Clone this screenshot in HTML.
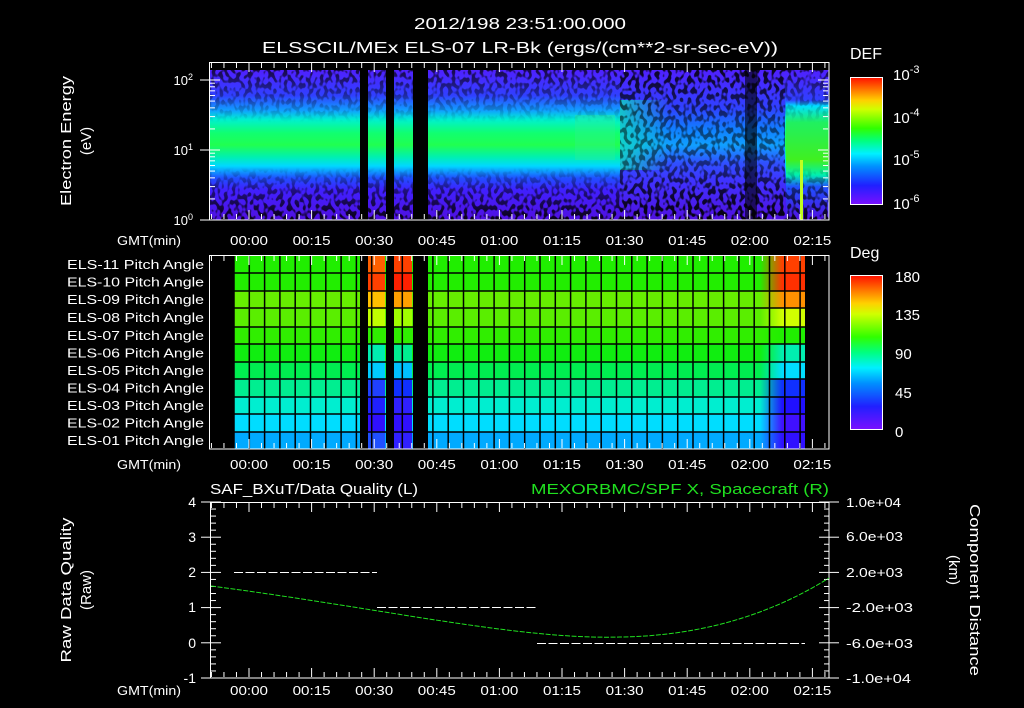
<!DOCTYPE html>
<html><head><meta charset="utf-8"><style>
html,body{margin:0;padding:0;background:#000;width:1024px;height:708px;overflow:hidden}
svg{display:block}
text{font-family:"Liberation Sans",sans-serif;fill:#fff}
</style></head><body>
<svg id="s" width="1024" height="708" viewBox="0 0 1024 708" xmlns="http://www.w3.org/2000/svg">
<defs>
<linearGradient id="spec" x1="0" y1="70" x2="0" y2="220" gradientUnits="userSpaceOnUse">
<stop offset="0" stop-color="#5020ff"/>
<stop offset="0.17" stop-color="#3040ff"/>
<stop offset="0.27" stop-color="#10a0ff"/>
<stop offset="0.33" stop-color="#00f0d0"/>
<stop offset="0.42" stop-color="#10ff70"/>
<stop offset="0.5" stop-color="#20ff50"/>
<stop offset="0.58" stop-color="#00f0b0"/>
<stop offset="0.64" stop-color="#00d8ff"/>
<stop offset="0.72" stop-color="#2050ff"/>
<stop offset="0.8" stop-color="#4020ff"/>
<stop offset="1" stop-color="#5010e0"/>
</linearGradient>
<linearGradient id="spec2" x1="0" y1="70" x2="0" y2="220" gradientUnits="userSpaceOnUse">
<stop offset="0" stop-color="#5020ff"/>
<stop offset="0.25" stop-color="#3040ff"/>
<stop offset="0.4" stop-color="#1080ff"/>
<stop offset="0.5" stop-color="#10a0ff"/>
<stop offset="0.62" stop-color="#3050ff"/>
<stop offset="0.75" stop-color="#4030ff"/>
<stop offset="1" stop-color="#5010e0"/>
</linearGradient>
<linearGradient id="specR" x1="0" y1="70" x2="0" y2="220" gradientUnits="userSpaceOnUse">
<stop offset="0" stop-color="#5020ff"/>
<stop offset="0.2" stop-color="#3040ff"/>
<stop offset="0.24" stop-color="#00e0ff"/>
<stop offset="0.35" stop-color="#20f060"/>
<stop offset="0.6" stop-color="#40f020"/>
<stop offset="0.7" stop-color="#00f0b0"/>
<stop offset="0.78" stop-color="#2050ff"/>
<stop offset="1" stop-color="#5010e0"/>
</linearGradient>
<linearGradient id="noiseMask" x1="0" y1="70" x2="0" y2="220" gradientUnits="userSpaceOnUse">
<stop offset="0" stop-color="#fff" stop-opacity="0.7"/>
<stop offset="0.25" stop-color="#fff" stop-opacity="0.2"/>
<stop offset="0.35" stop-color="#fff" stop-opacity="0"/>
<stop offset="0.65" stop-color="#fff" stop-opacity="0"/>
<stop offset="0.8" stop-color="#fff" stop-opacity="0.5"/>
<stop offset="1" stop-color="#fff" stop-opacity="0.9"/>
</linearGradient>
<mask id="nm"><rect x="210" y="70" width="619" height="150" fill="url(#noiseMask)"/><rect x="620" y="70" width="165" height="150" fill="#fff" opacity="0.5"/></mask>
<filter id="noise" x="0" y="0" width="100%" height="100%">
<feTurbulence type="fractalNoise" baseFrequency="0.25 0.18" numOctaves="1" seed="3"/>
<feColorMatrix type="matrix" values="0 0 0 0 0  0 0 0 0 0  0 0 0 0 0  0 0 0 9 -4.3"/>
</filter>
<linearGradient id="def" x1="0" y1="1" x2="0" y2="0">
<stop offset="0" stop-color="#7a10ff"/>
<stop offset="0.15" stop-color="#2020ff"/>
<stop offset="0.3" stop-color="#0090ff"/>
<stop offset="0.4" stop-color="#00f0ff"/>
<stop offset="0.5" stop-color="#00ff80"/>
<stop offset="0.6" stop-color="#30ff00"/>
<stop offset="0.75" stop-color="#d0ff00"/>
<stop offset="0.82" stop-color="#ffd000"/>
<stop offset="1" stop-color="#ff1000"/>
</linearGradient>
<linearGradient id="blend" x1="0" x2="1">
<stop offset="0" stop-color="#10e0c0" stop-opacity="0.8"/>
<stop offset="1" stop-color="#10e0c0" stop-opacity="0"/>
</linearGradient>
</defs>

<text x="520" y="29" font-size="16" text-anchor="middle" textLength="212" lengthAdjust="spacingAndGlyphs">2012/198 23:51:00.000</text>
<text x="520" y="53" font-size="16" text-anchor="middle" textLength="516" lengthAdjust="spacingAndGlyphs">ELSSCIL/MEx ELS-07 LR-Bk  (ergs/(cm**2-sr-sec-eV))</text>

<rect x="210" y="70" width="619" height="150" fill="url(#spec)"/>
<rect x="620" y="70" width="165" height="150" fill="url(#spec2)"/>
<rect x="620" y="100" width="50" height="70" fill="url(#blend)"/>
<rect x="786" y="70" width="43" height="150" fill="url(#specR)"/>
<rect x="575" y="115" width="40" height="45" fill="#30f090" opacity="0.35"/>
<rect x="210" y="70" width="619" height="150" filter="url(#noise)" mask="url(#nm)"/>
<rect x="745" y="70" width="12" height="150" fill="#000" opacity="0.6"/>
<rect x="800" y="160" width="3" height="60" fill="#c0ff20"/>
<rect x="360" y="70" width="8" height="150" fill="#000"/>
<rect x="386" y="70" width="8" height="150" fill="#000"/>
<rect x="413" y="70" width="15" height="150" fill="#000"/>
<rect x="209.5" y="62.5" width="619.5" height="157.5" fill="none" stroke="#fff"/>
<g id="t1"></g>
<text x="193" y="85" font-size="13" text-anchor="end">10<tspan dy="-5" font-size="9">2</tspan></text>
<text x="193" y="155" font-size="13" text-anchor="end">10<tspan dy="-5" font-size="9">1</tspan></text>
<text x="193" y="225" font-size="13" text-anchor="end">10<tspan dy="-5" font-size="9">0</tspan></text>
<text transform="translate(71,141) rotate(-90)" font-size="15" text-anchor="middle" textLength="130" lengthAdjust="spacingAndGlyphs">Electron Energy</text>
<text transform="translate(91,141) rotate(-90)" font-size="15" text-anchor="middle">(eV)</text>
<text x="181" y="245" font-size="13" text-anchor="end" textLength="64" lengthAdjust="spacingAndGlyphs">GMT(min)</text>
<g id="lab1"></g>

<text x="850" y="59" font-size="16">DEF</text>
<rect x="850.5" y="77.5" width="32" height="127" fill="url(#def)" stroke="#fff"/>
<text x="893" y="80" font-size="15">10<tspan dy="-7" font-size="11">-3</tspan></text>
<text x="893" y="123" font-size="15">10<tspan dy="-7" font-size="11">-4</tspan></text>
<text x="893" y="165" font-size="15">10<tspan dy="-7" font-size="11">-5</tspan></text>
<text x="893" y="209" font-size="15">10<tspan dy="-7" font-size="11">-6</tspan></text>

<g id="p2"></g>
<rect x="209.5" y="255.5" width="619.5" height="193.5" fill="none" stroke="#fff"/>
<g id="rowlab"></g>
<text x="181" y="469" font-size="13" text-anchor="end" textLength="64" lengthAdjust="spacingAndGlyphs">GMT(min)</text>
<g id="lab2"></g>
<text x="850" y="258" font-size="16">Deg</text>
<rect x="850.5" y="275.5" width="32" height="154" fill="url(#def)" stroke="#fff"/>
<text x="895" y="282" font-size="15">180</text>
<text x="895" y="320" font-size="15">135</text>
<text x="895" y="359" font-size="15">90</text>
<text x="895" y="398" font-size="15">45</text>
<text x="895" y="437" font-size="15">0</text>

<text x="210" y="494" font-size="15" textLength="208" lengthAdjust="spacingAndGlyphs">SAF_BXuT/Data Quality (L)</text>
<text x="829" y="494" font-size="15" text-anchor="end" style="fill:#20e020" textLength="298" lengthAdjust="spacingAndGlyphs">MEXORBMC/SPF X, Spacecraft (R)</text>
<rect x="210.5" y="502.5" width="618.5" height="175.5" fill="none" stroke="#fff"/>
<g id="t3"></g>
<path d="M234 572.5H377M377 607.5H537M537 643.5H805" stroke="#fff" stroke-dasharray="9,2.5" fill="none"/>
<path d="M211 586 C 380 608, 520 640, 620 637 C 700 636, 770 615, 829 578" stroke="#20e020" stroke-dasharray="5,1.5" fill="none"/>
<text x="196" y="507" font-size="14" text-anchor="end">4</text>
<text x="196" y="542" font-size="14" text-anchor="end">3</text>
<text x="196" y="577" font-size="14" text-anchor="end">2</text>
<text x="196" y="612" font-size="14" text-anchor="end">1</text>
<text x="196" y="648" font-size="14" text-anchor="end">0</text>
<text x="196" y="683" font-size="14" text-anchor="end">-1</text>
<text transform="translate(71,590) rotate(-90)" font-size="15" text-anchor="middle" textLength="145" lengthAdjust="spacingAndGlyphs">Raw Data Quality</text>
<text transform="translate(91,590) rotate(-90)" font-size="15" text-anchor="middle">(Raw)</text>
<text x="846" y="507" font-size="13" textLength="55" lengthAdjust="spacingAndGlyphs">1.0e+04</text>
<text x="846" y="541" font-size="13" textLength="57" lengthAdjust="spacingAndGlyphs">6.0e+03</text>
<text x="846" y="577" font-size="13" textLength="57" lengthAdjust="spacingAndGlyphs">2.0e+03</text>
<text x="846" y="612" font-size="13" textLength="67" lengthAdjust="spacingAndGlyphs">-2.0e+03</text>
<text x="846" y="648" font-size="13" textLength="67" lengthAdjust="spacingAndGlyphs">-6.0e+03</text>
<text x="846" y="683" font-size="13" textLength="65" lengthAdjust="spacingAndGlyphs">-1.0e+04</text>
<text transform="translate(970,590) rotate(90)" font-size="15" text-anchor="middle" textLength="172" lengthAdjust="spacingAndGlyphs">Component Distance</text>
<text transform="translate(949,570) rotate(90)" font-size="15" text-anchor="middle">(km)</text>
<text x="181" y="695" font-size="13" text-anchor="end" textLength="64" lengthAdjust="spacingAndGlyphs">GMT(min)</text>
<g id="lab3"></g>
</svg>
<script>
var NS="http://www.w3.org/2000/svg";
function el(p,n,a,t){var e=document.createElementNS(NS,n);for(var k in a)e.setAttribute(k,a[k]);if(t)e.textContent=t;document.getElementById(p).appendChild(e);return e;}
var times=["00:00","00:15","00:30","00:45","01:00","01:15","01:30","01:45","02:00","02:15"];
var x0=249,dx=62.6;
function xaxis(g,lab,top,bot,ly){
 for(var i=-4;i<50;i++){var x=x0+i*dx/5; if(x<211||x>828)continue;var big=(i%5==0);var L=big?9:5;
  el(g,"line",{x1:x,x2:x,y1:top,y2:top+L,stroke:"#fff"});
  el(g,"line",{x1:x,x2:x,y1:bot,y2:bot-L,stroke:"#fff"});}
 times.forEach(function(t,i){el(lab,"text",{x:x0+i*dx,y:ly,"font-size":13,"text-anchor":"middle",textLength:38,lengthAdjust:"spacingAndGlyphs"},t);});
}
xaxis("t1","lab1",63,219,245);
[80,150,220].forEach(function(y){el("t1","line",{x1:210,x2:220,y1:y,y2:y,stroke:"#fff"});el("t1","line",{x1:828,x2:818,y1:y,y2:y,stroke:"#fff"});el("t1","line",{x1:200,x2:210,y1:y,y2:y,stroke:"#fff"});});
[2,3,4,5,6,7,8,9].forEach(function(m){var l=Math.log10(m)*70;[150,220].forEach(function(b){var y=b-l;el("t1","line",{x1:210,x2:215,y1:y,y2:y,stroke:"#fff"});el("t1","line",{x1:828,x2:823,y1:y,y2:y,stroke:"#fff"});});});
var rows=["#20ee00","#22ee00","#66ee00","#5aee00","#30ee00","#10ee10","#00ee50","#00ee90","#00eed0","#00ddff","#00aaff"];
var gapc=[["#ff6000","#ff4000"],["#ff4000","#ff2000"],["#ffc000","#ffa000"],["#c0ff00","#a0ff00"],["#30ee00","#30ee00"],["#00eeb0","#00ee90"],["#00ccff","#00c0ff"],["#2040ff","#1030ff"],["#2020ff","#3020ff"],["#3010ff","#3010ff"],["#2050ff","#3020ff"]];
var rightc=["#ff4000","#ff3000","#ff9000","#d0ff00","#20ee00","#00eeb0","#00ddff","#1030ff","#2010ff","#4010ff","#3010ff"];
var rb=[256,273,291,308,327,344,362,379,397,414,432,449];
for(var r=0;r<11;r++){
 var y=rb[r],h=rb[r+1]-y;
 el("p2","rect",{x:234,y:y,width:571,height:h,fill:rows[r]});
 var gid="rg"+r;var lg=document.createElementNS(NS,"linearGradient");lg.id=gid;lg.setAttribute("x1","0");lg.setAttribute("x2","1");
 [[0,rows[r]],[0.5,rightc[r]],[1,rightc[r]]].forEach(function(s){var st=document.createElementNS(NS,"stop");st.setAttribute("offset",s[0]);st.setAttribute("stop-color",s[1]);lg.appendChild(st);});
 document.querySelector("defs").appendChild(lg);
 el("p2","rect",{x:760,y:y,width:45,height:h,fill:"url(#"+gid+")"});
 el("p2","rect",{x:368,y:y,width:17,height:h,fill:gapc[r][0]});
 el("p2","rect",{x:394,y:y,width:18,height:h,fill:gapc[r][1]});
}
for(var c=0;c<38;c++){var x=234+c*15.3;el("p2","line",{x1:x,x2:x,y1:256,y2:449,stroke:"#000","stroke-width":1.5});}
for(var r=1;r<11;r++){el("p2","line",{x1:234,x2:805,y1:rb[r],y2:rb[r],stroke:"#000","stroke-width":1.5});}
[[360,8],[386,8],[413,15]].forEach(function(g){el("p2","rect",{x:g[0],y:256,width:g[1],height:193,fill:"#000"});});
xaxis("p2","lab2",256,448,469);
var names=["ELS-11","ELS-10","ELS-09","ELS-08","ELS-07","ELS-06","ELS-05","ELS-04","ELS-03","ELS-02","ELS-01"];
names.forEach(function(n,i){el("rowlab","text",{x:204,y:(rb[i]+rb[i+1])/2+4.5,"font-size":12.5,"text-anchor":"end",textLength:137,lengthAdjust:"spacingAndGlyphs"},n+" Pitch Angle");});
xaxis("t3","lab3",503,677,695);
for(var i=0;i<=25;i++){var y=502+i*176/25;var L=(i%5==0)?10:5;
 el("t3","line",{x1:211,x2:211+L,y1:y,y2:y,stroke:"#fff"});el("t3","line",{x1:201,x2:211,y1:y,y2:y,stroke:(i%5==0)?"#fff":"none"});
 el("t3","line",{x1:829,x2:829-L,y1:y,y2:y,stroke:"#fff"});el("t3","line",{x1:829,x2:839,y1:y,y2:y,stroke:(i%5==0)?"#fff":"none"});}
</script>
</body></html>
